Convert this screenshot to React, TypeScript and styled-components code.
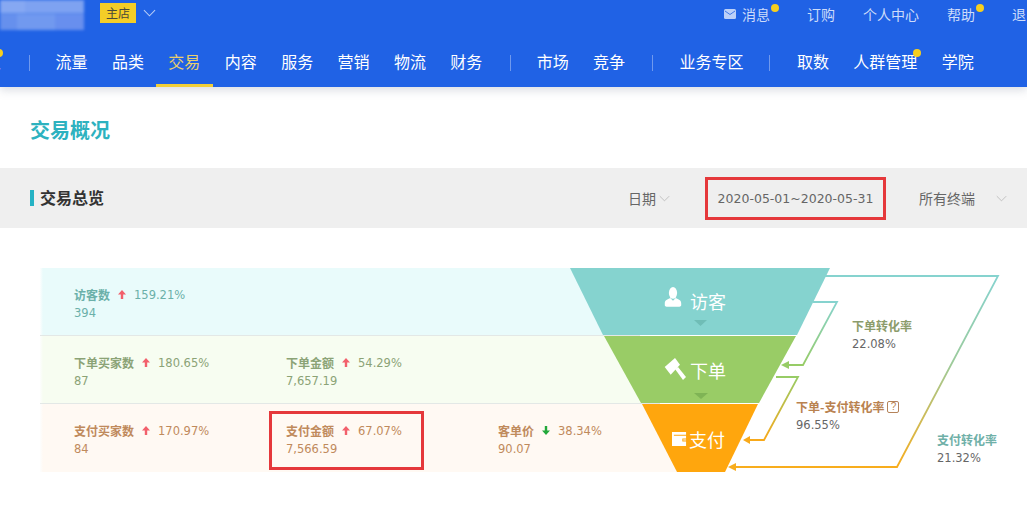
import React from "react";
import styled, { createGlobalStyle } from "styled-components";

const CJK = `"Noto Sans CJK SC", "Liberation Sans", sans-serif`;

const Global = createGlobalStyle`
  html, body { margin: 0; padding: 0; background: #fff; }
  body { font-family: ${CJK}; }
  *, *::before, *::after { box-sizing: border-box; }
`;

const Page = styled.div`
  width: 1027px;
  height: 508px;
  overflow: hidden;
  background: #fff;
`;

const Header = styled.header`
  height: 87px;
  background: #2062e5;
  box-shadow: 0 3px 9px rgba(120, 130, 150, 0.28);
  position: relative;
  overflow: hidden;
`;

const TopBar = styled.div`
  height: 40px;
  display: flex;
  align-items: flex-start;
`;

const BlurLogo = styled.div`
  width: 84px;
  height: 30px;
  margin-right: 16px;
  filter: blur(1.5px);
  background:
    linear-gradient(90deg, #86a8f2 0 30%, #7ea2f1 30% 100%) top / 100% 45% no-repeat,
    linear-gradient(90deg, #6690ed 0 20%, #7199ef 20% 65%, #688fee 65% 100%) bottom / 100% 55% no-repeat;
`;

const Badge = styled.span`
  width: 36px;
  height: 20px;
  margin-top: 3px;
  background: #f4cd27;
  color: #4a4a3a;
  font-size: 12px;
  line-height: 20px;
  text-align: center;
`;

const Chevron = styled.svg<{ $ml: number; $w: number; $mt: number }>`
  display: block;
  width: ${(p) => p.$w}px;
  height: ${(p) => Math.round(p.$w / 2) + 1}px;
  margin-left: ${(p) => p.$ml}px;
  margin-top: ${(p) => p.$mt}px;
  flex: none;
`;

const TopLinks = styled.nav`
  margin-left: auto;
  margin-right: -13px;
  display: flex;
  gap: 28px;
  padding-top: 4px;
`;

const TopLink = styled.a<{ $dotted?: boolean }>`
  position: relative;
  display: flex;
  align-items: center;
  gap: 6px;
  height: 20px;
  margin-right: ${(p) => (p.$dotted ? 9 : 0)}px;
  color: #cddcfa;
  font-size: 14px;
  white-space: nowrap;
`;

const Dot = styled.i<{ $x: number; $y: number }>`
  position: absolute;
  right: ${(p) => p.$x}px;
  top: ${(p) => p.$y}px;
  width: 8px;
  height: 8px;
  border-radius: 50%;
  background: #f6cf1f;
`;

const NavBar = styled.nav`
  height: 47px;
  display: flex;
  align-items: stretch;
`;

const NavItem = styled.a<{ $active?: boolean; $ml?: number }>`
  position: relative;
  display: flex;
  align-items: center;
  height: 47px;
  padding: 0 12.2px 3px;
  margin-left: ${(p) => p.$ml ?? 0}px;
  color: ${(p) => (p.$active ? "#e9cf6c" : "#fff")};
  font-size: 16px;
  white-space: nowrap;
  border-bottom: 3px solid ${(p) => (p.$active ? "#f2cf37" : "transparent")};
  flex: none;
`;

const NavDivider = styled.span<{ $ml: number }>`
  width: 1px;
  height: 16px;
  margin: 15px 0 0 ${(p) => p.$ml}px;
  background: #6f99ee;
  flex: none;
`;

const Title = styled.h1`
  margin: 0;
  height: 81px;
  padding: 28px 0 0 30px;
  font-size: 20px;
  line-height: 30px;
  font-weight: 700;
  color: #2db2bf;
`;

const FilterBar = styled.div`
  height: 60px;
  background: #efefef;
  display: flex;
  align-items: center;
  padding-left: 30px;
`;

const SectionTitle = styled.h2`
  margin: 0;
  border-left: 4px solid #25b2c4;
  padding-left: 6px;
  height: 16px;
  width: 74px;
  font-size: 16px;
  line-height: 15px;
  font-weight: 700;
  color: #333;
  white-space: nowrap;
  flex: none;
`;

const FilterText = styled.span<{ $ml: number }>`
  margin-left: ${(p) => p.$ml}px;
  font-size: 14px;
  color: #666;
  white-space: nowrap;
`;

const DateBox = styled.div`
  width: 181px;
  height: 43px;
  margin-left: 35px;
  border: 3px solid #e5383b;
  display: flex;
  align-items: center;
  justify-content: center;
  font-family: "DejaVu Sans", sans-serif;
  font-size: 12.5px;
  color: #666;
  flex: none;
`;

const Diagram = styled.section`
  position: relative;
  margin: 40px 0 0 40px;
  width: 987px;
  height: 212px;
`;

const Row = styled.div<{ $bg: string; $w: number; $line: boolean }>`
  width: ${(p) => p.$w}px;
  height: 68px;
  padding-left: 34px;
  display: flex;
  background: linear-gradient(90deg, #fdfefe 0, ${(p) => p.$bg} 3px);
  border-bottom: 1px solid ${(p) => (p.$line ? "#e3e8e6" : "transparent")};
`;

const Cell = styled.div<{ $marked?: boolean; $color: string }>`
  position: relative;
  flex: none;
  width: 212px;
  padding-top: 18px;
  color: ${(p) => p.$color};
  &::after {
    content: "";
    display: ${(p) => (p.$marked ? "block" : "none")};
    position: absolute;
    left: -17px;
    top: 7px;
    width: 155px;
    height: 59px;
    border: 3px solid #e5383b;
  }
`;

const CellHead = styled.div`
  display: flex;
  align-items: center;
  height: 17px;
  font-size: 12px;
`;

const CellName = styled.strong`
  font-weight: 700;
`;

const Arrow = styled.svg`
  width: 8px;
  height: 9px;
  margin: 0 8px;
  flex: none;
`;

const Num = styled.span`
  font-family: "DejaVu Sans", sans-serif;
  font-size: 11.5px;
`;

const CellValue = styled(Num)`
  display: block;
  height: 17px;
  margin-top: 2px;
  line-height: 17px;
`;

const FunnelArt = styled.svg`
  position: absolute;
  left: 0;
  top: 0;
  width: 987px;
  height: 212px;
`;

const Stages = styled.div`
  position: absolute;
  left: 530px;
  top: 0;
  width: 260px;
  display: flex;
  flex-direction: column;
`;

const Stage = styled.div<{ $pt: number; $gap: number; $pr: number }>`
  height: 68px;
  padding-top: ${(p) => p.$pt}px;
  padding-right: ${(p) => p.$pr}px;
  display: flex;
  justify-content: center;
  align-items: flex-start;
  gap: ${(p) => p.$gap}px;
  color: #fff;
  font-size: 18px;
  line-height: 26px;
`;

const StageIcon = styled.svg<{ $mt: number }>`
  margin-top: ${(p) => p.$mt}px;
  flex: none;
`;

const Rate = styled.div<{ $x: number; $y: number }>`
  position: absolute;
  left: ${(p) => p.$x}px;
  top: ${(p) => p.$y}px;
  white-space: nowrap;
`;

const RateName = styled.div<{ $color: string }>`
  display: flex;
  align-items: center;
  gap: 3px;
  height: 17px;
  font-size: 12px;
  font-weight: 700;
  color: ${(p) => p.$color};
`;

const RateValue = styled(CellValue)`
  color: #666;
`;

const Help = styled.span`
  width: 12px;
  height: 12px;
  border: 1px solid #b5835a;
  border-radius: 2px;
  font-family: "Liberation Sans", sans-serif;
  font-weight: 400;
  font-size: 10px;
  line-height: 10px;
  text-align: center;
`;

const ChevronIcon = ({ ml, w, mt = 0, color }: { ml: number; w: number; mt?: number; color: string }) => (
  <Chevron $ml={ml} $w={w} $mt={mt} viewBox="0 0 14 8" fill="none" stroke={color} strokeWidth="1.100">
    <path d="M1 1l6 6 6-6" />
  </Chevron>
);

const UpArrow = () => (
  <Arrow viewBox="0 0 8 9"><path d="M4 0l4 4.500H5.200V9H2.800V4.500H0z" fill="#f2606c" /></Arrow>
);
const DownArrow = () => (
  <Arrow viewBox="0 0 8 9"><path d="M4 9L0 4.500h2.800V0h2.400v4.500H8z" fill="#22a83a" /></Arrow>
);

type Metric = { name: string; pct: string; val: string; down?: boolean; marked?: boolean };
const rows: { bg: string; color: string; w: number; items: Metric[] }[] = [
  { bg: "#e9fbfb", color: "#6bb0a9", w: 600, items: [{ name: "访客数", pct: "159.21%", val: "394" }] },
  {
    bg: "#f7fdf1", color: "#8ba376", w: 620,
    items: [
      { name: "下单买家数", pct: "180.65%", val: "87" },
      { name: "下单金额", pct: "54.29%", val: "7,657.19" },
    ],
  },
  {
    bg: "#fff9f3", color: "#bf8a5c", w: 640,
    items: [
      { name: "支付买家数", pct: "170.97%", val: "84" },
      { name: "支付金额", pct: "67.07%", val: "7,566.59", marked: true },
      { name: "客单价", pct: "38.34%", val: "90.07", down: true },
    ],
  },
];

export default function App() {
  return (
    <Page>
      <Global />
      <Header>
        <TopBar>
          <BlurLogo />
          <Badge>主店</Badge>
          <ChevronIcon ml={7} w={13} mt={9} color="#b9cdf6" />
          <TopLinks>
            <TopLink $dotted>
              <svg width="12" height="10" viewBox="0 0 12 10">
                <rect width="12" height="10" rx="1.500" fill="#bcd0f8" />
                <path d="M1 2l5 3.500L11 2" fill="none" stroke="#2062e5" strokeWidth=".8" />
              </svg>
              消息<Dot $x={-9} $y={0} />
            </TopLink>
            <TopLink>订购</TopLink>
            <TopLink>个人中心</TopLink>
            <TopLink $dotted>帮助<Dot $x={-9} $y={0} /></TopLink>
            <TopLink>退出</TopLink>
          </TopLinks>
        </TopBar>
        <NavBar>
          <NavItem $ml={-43}>首页<Dot $x={10} $y={9} /></NavItem>
          <NavDivider $ml={16} />
          <NavItem $ml={13}>流量</NavItem>
          <NavItem>品类</NavItem>
          <NavItem $active>交易</NavItem>
          <NavItem>内容</NavItem>
          <NavItem>服务</NavItem>
          <NavItem>营销</NavItem>
          <NavItem>物流</NavItem>
          <NavItem>财务</NavItem>
          <NavDivider $ml={15} />
          <NavItem $ml={14}>市场</NavItem>
          <NavItem>竞争</NavItem>
          <NavDivider $ml={15} />
          <NavItem $ml={14}>业务专区</NavItem>
          <NavDivider $ml={13} />
          <NavItem $ml={15}>取数</NavItem>
          <NavItem>人群管理<Dot $x={8} $y={9} /></NavItem>
          <NavItem>学院</NavItem>
        </NavBar>
      </Header>

      <Title>交易概况</Title>

      <FilterBar>
        <SectionTitle>交易总览</SectionTitle>
        <FilterText $ml={524}>日期</FilterText>
        <ChevronIcon ml={3} w={11} color="#bbb" />
        <DateBox>2020-05-01~2020-05-31</DateBox>
        <FilterText $ml={33}>所有终端</FilterText>
        <ChevronIcon ml={21} w={11} color="#bbb" />
      </FilterBar>

      <Diagram>
        {rows.map((r, i) => (
          <Row key={r.bg} $bg={r.bg} $w={r.w} $line={i < 2}>
            {r.items.map((m) => (
              <Cell key={m.name} $color={r.color} $marked={m.marked}>
                <CellHead>
                  <CellName>{m.name}</CellName>
                  {m.down ? <DownArrow /> : <UpArrow />}
                  <Num>{m.pct}</Num>
                </CellHead>
                <CellValue>{m.val}</CellValue>
              </Cell>
            ))}
          </Row>
        ))}

        <FunnelArt viewBox="0 0 987 212" fill="none">
          <defs>
            <linearGradient id="outer" x1="0" y1="8" x2="0" y2="199" gradientUnits="userSpaceOnUse">
              <stop offset="0" stopColor="#86d3cf" />
              <stop offset=".45" stopColor="#9ccb9c" />
              <stop offset="1" stopColor="#f8ad1d" />
            </linearGradient>
            <linearGradient id="mid1" x1="0" y1="34" x2="0" y2="97" gradientUnits="userSpaceOnUse">
              <stop offset="0" stopColor="#86d3cf" />
              <stop offset="1" stopColor="#97cc66" />
            </linearGradient>
            <linearGradient id="mid2" x1="0" y1="109" x2="0" y2="172" gradientUnits="userSpaceOnUse">
              <stop offset="0" stopColor="#97cc66" />
              <stop offset="1" stopColor="#f8a91a" />
            </linearGradient>
          </defs>
          <path d="M530 0H790L757 67H563z" fill="#85d3cf" />
          <path d="M564 68H756L719 135H601z" fill="#99cc66" />
          <path d="M602 136H718L685 204H637z" fill="#ffa60d" />
          <path d="M654 52h13l-6.500 6z" fill="#6fbdb6" />
          <path d="M654 125h14l-7 6z" fill="#7fb455" />

          <path d="M782 8H958L857 199H692" stroke="url(#outer)" strokeWidth="1.800" />
          <path d="M696 195v8l-8-4z" fill="#f8ad1d" />
          <path d="M773 34H797L763 97H745" stroke="url(#mid1)" strokeWidth="1.800" />
          <path d="M749 93v8l-8-4z" fill="#97cc66" />
          <path d="M736 109H758L724 172H707" stroke="url(#mid2)" strokeWidth="1.800" />
          <path d="M710 168v8l-7-4z" fill="#f8a91a" />
        </FunnelArt>

        <Stages>
          <Stage $pt={20} $gap={8} $pr={10}>
            <StageIcon $mt={-1} width="18" height="21" viewBox="0 0 18 23" fill="#fff">
              <ellipse cx="9" cy="6.500" rx="4.500" ry="6.500" />
              <path d="M6 12c-3 2-6 2-6 6v2c0 1 1 1.500 2 1.500h14c1 0 2-.5 2-1.500v-2c0-4-3-4-6-6l-3 3z" />
            </StageIcon>
            访客
          </Stage>
          <Stage $pt={21} $gap={4} $pr={10}>
            <StageIcon $mt={1} width="22" height="23" viewBox="0 0 22 23" fill="#fff">
              <path d="M.7 9L11 0l5 6.700L6.700 16.700z" />
              <path d="M11 11l3-2 8 10-3 3z" />
            </StageIcon>
            下单
          </Stage>
          <Stage $pt={22} $gap={1} $pr={4}>
            <StageIcon $mt={6} width="17" height="15" viewBox="0 0 18 16" fill="#fff">
              <path fillRule="evenodd" d="M1 0h15v3H3v1h13v3h-4v3h4v5H1z" />
              <rect x="13" y="8" width="3" height="1" />
            </StageIcon>
            支付
          </Stage>
        </Stages>

        <Rate $x={812} $y={49}>
          <RateName $color="#8c9c6b">下单转化率</RateName>
          <RateValue>22.08%</RateValue>
        </Rate>
        <Rate $x={756} $y={130}>
          <RateName $color="#b98250">下单-支付转化率<Help>?</Help></RateName>
          <RateValue>96.55%</RateValue>
        </Rate>
        <Rate $x={897} $y={163}>
          <RateName $color="#6fb0a8">支付转化率</RateName>
          <RateValue>21.32%</RateValue>
        </Rate>
      </Diagram>
    </Page>
  );
}
